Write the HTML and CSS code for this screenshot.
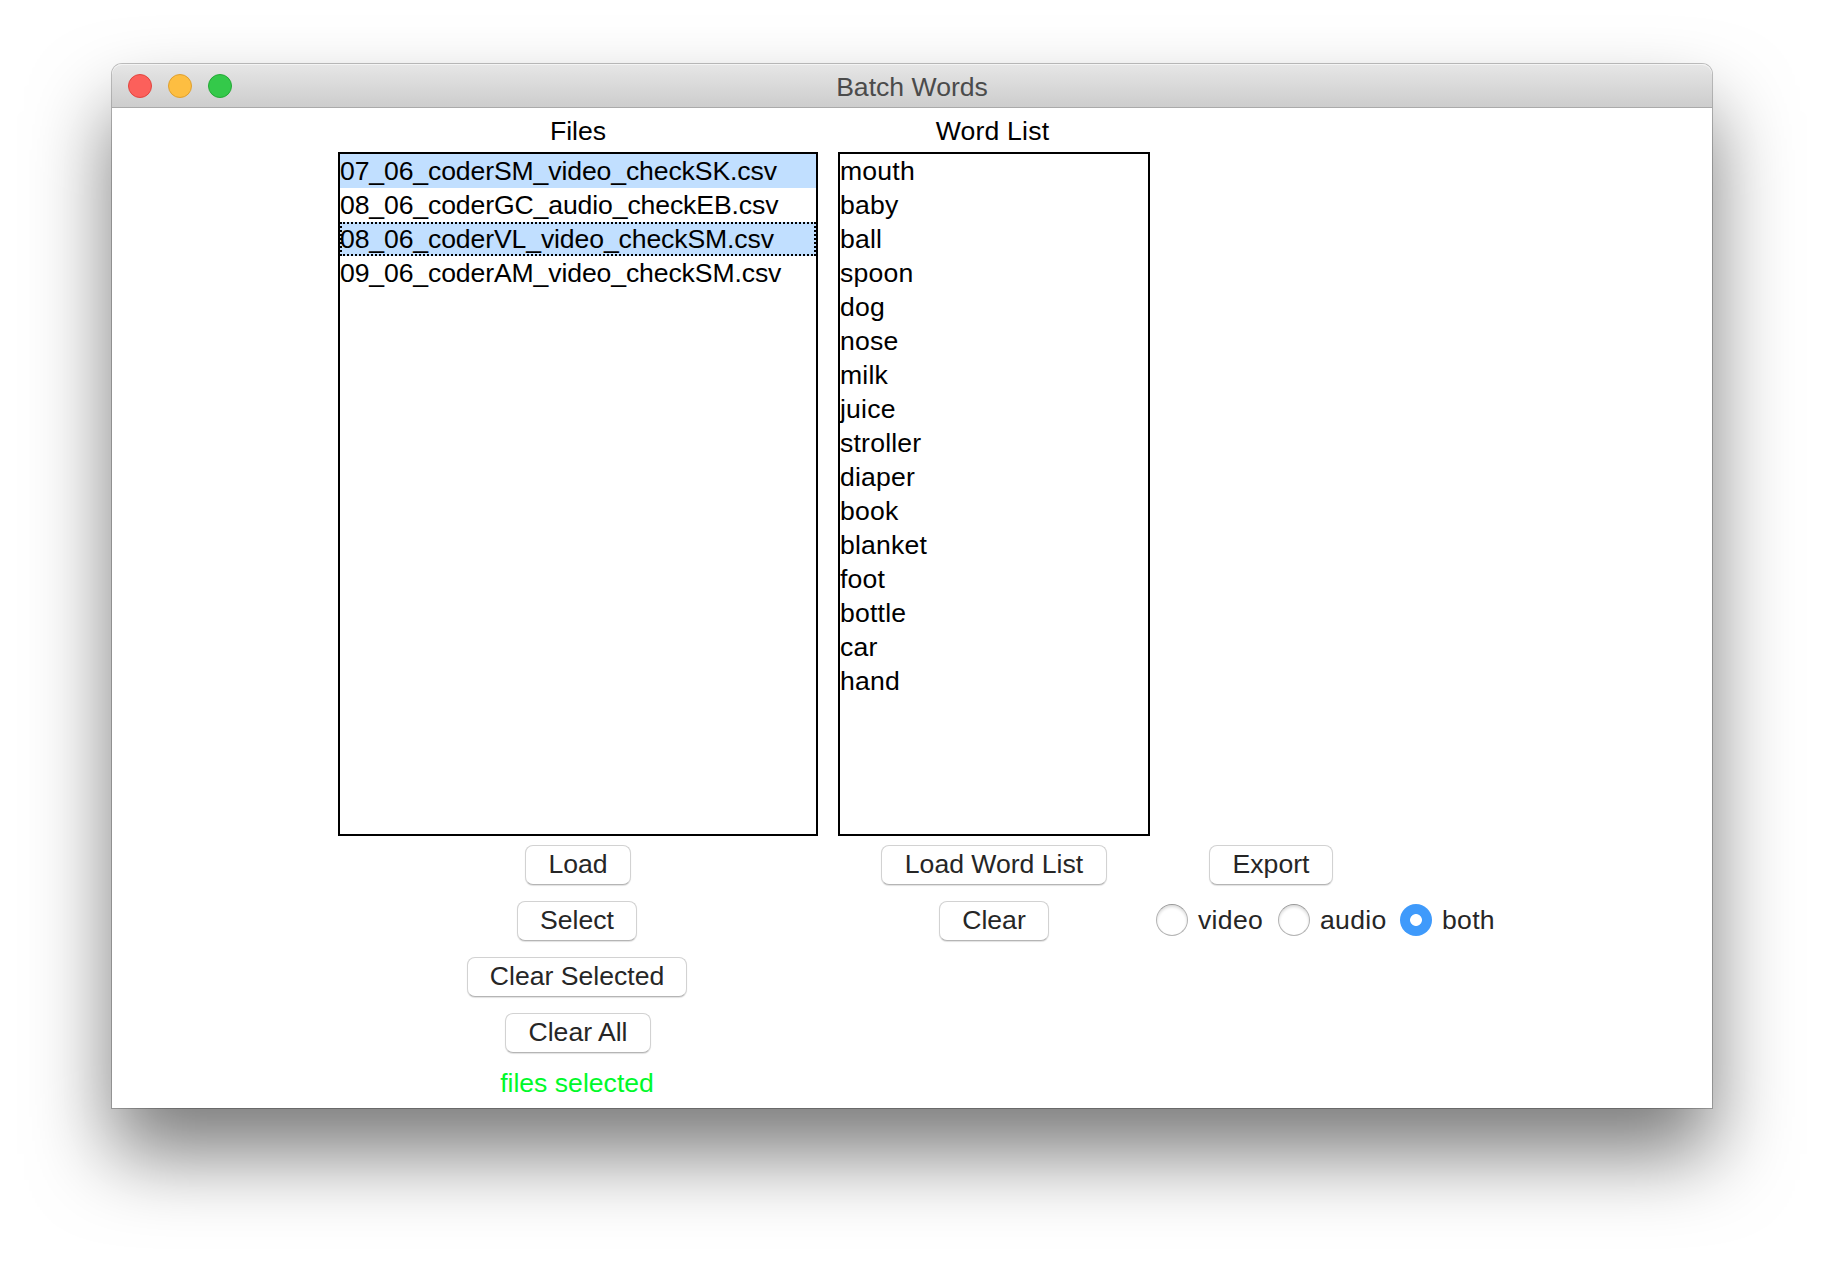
FILE: index.html
```html
<!DOCTYPE html>
<html lang="en">
<head>
<meta charset="utf-8">
<title>Batch Words</title>
<link rel="stylesheet" href="styles.css">
</head>
<body>
<main class="window">
  <header class="titlebar">
    <div class="lights">
      <span class="light close"></span>
      <span class="light minimize"></span>
      <span class="light zoom"></span>
    </div>
    <h1 class="title">Batch Words</h1>
  </header>
  <div class="content">
    <section class="column files">
      <h2 class="label">Files</h2>
      <ul class="listbox">
        <li class="selected">07_06_coderSM_video_checkSK.csv</li>
        <li>08_06_coderGC_audio_checkEB.csv</li>
        <li class="selected active">08_06_coderVL_video_checkSM.csv</li>
        <li>09_06_coderAM_video_checkSM.csv</li>
      </ul>
      <div class="buttons">
        <button class="btn load">Load</button>
        <button class="btn select">Select</button>
        <button class="btn clear-selected">Clear Selected</button>
        <button class="btn clear-all">Clear All</button>
      </div>
      <p class="status">files selected</p>
    </section>
    <section class="column words">
      <h2 class="label">Word List</h2>
      <ul class="listbox">
        <li>mouth</li>
        <li>baby</li>
        <li>ball</li>
        <li>spoon</li>
        <li>dog</li>
        <li>nose</li>
        <li>milk</li>
        <li>juice</li>
        <li>stroller</li>
        <li>diaper</li>
        <li>book</li>
        <li>blanket</li>
        <li>foot</li>
        <li>bottle</li>
        <li>car</li>
        <li>hand</li>
      </ul>
      <div class="buttons">
        <button class="btn load-words">Load Word List</button>
        <button class="btn clear">Clear</button>
      </div>
    </section>
    <section class="column export-column">
      <button class="btn export">Export</button>
      <div class="radios">
        <label class="radio"><span class="dot"></span>video</label>
        <label class="radio"><span class="dot"></span>audio</label>
        <label class="radio"><span class="dot checked"></span>both</label>
      </div>
    </section>
  </div>
</main>
</body>
</html>
```
FILE: styles.css
```css
* {
  box-sizing: border-box;
}

body {
  margin: 0;
  height: 1268px;
  padding: 64px 112px;
  overflow: hidden;
  background: #fff;
  color: #000;
  font: 26.6px/34px "Liberation Sans", Arial, sans-serif;
}

h1, h2, p, ul {
  margin: 0;
  padding: 0;
  font-size: inherit;
  font-weight: normal;
}

.window {
  width: 1600px;
  height: 1044px;
  border-radius: 10px 10px 0 0;
  background: #fff;
  box-shadow: 0 0 0 1px rgba(0, 0, 0, 0.24), 0 46px 80px rgba(0, 0, 0, 0.52);
}

.titlebar {
  display: grid;
  grid-template-columns: 1fr auto 1fr;
  align-items: center;
  height: 44px;
  padding: 0 16px;
  border-bottom: 1px solid #aaa;
  border-radius: 10px 10px 0 0;
  background: linear-gradient(#e6e6e6, #cdcdcd);
  box-shadow: inset 0 1px #f4f4f4;
}

.title {
  padding-top: 2px;
  color: #4b4b4b;
}

.lights {
  display: flex;
  gap: 16px;
}

.light {
  width: 24px;
  height: 24px;
  border: 1px solid;
  border-radius: 50%;
}

.close {
  border-color: #e2453f;
  background: #fc605b;
}

.minimize {
  border-color: #dfa02f;
  background: #fdbe41;
}

.zoom {
  border-color: #24a936;
  background: #34c94a;
}

.content {
  display: grid;
  grid-template-columns: 480px 312px 360px;
  column-gap: 20px;
  height: 1000px;
  padding: 6px 0 0 226px;
}

.column {
  display: flex;
  flex-direction: column;
  align-items: center;
}

.label {
  height: 38px;
}

.words .label {
  padding-right: 3px;
  letter-spacing: 0.2px;
}

.listbox {
  width: 100%;
  height: 684px;
  border: 2px solid #000;
  list-style: none;
}

.listbox li {
  position: relative;
  height: 34px;
  line-height: 35px;
  white-space: nowrap;
}

.files li {
  letter-spacing: -0.12px;
}

.words li {
  letter-spacing: 0.2px;
}

.selected {
  background: #c1dfff;
}

.active::after {
  content: "";
  position: absolute;
  inset: 0;
  border: 2px dotted #000;
}

.buttons {
  display: flex;
  flex-direction: column;
  align-items: center;
  gap: 16px;
  margin-top: 9px;
}

.btn {
  height: 40px;
  padding: 0 0 2px;
  border: 1px solid #d2d2d2;
  border-bottom-color: #b5b5b5;
  border-radius: 8px;
  background: #fff;
  box-shadow: 0 1px 1px rgba(0, 0, 0, 0.12);
  color: #262626;
  font: inherit;
  white-space: nowrap;
}

.load { width: 106px; }
.select { width: 120px; margin-right: 2px; }
.clear-selected { width: 220px; margin-right: 2px; }
.clear-all { width: 146px; }
.load-words { width: 226px; }
.clear { width: 110px; }
.export { width: 124px; }

.status {
  margin-top: 13px;
  padding-right: 2px;
  color: #00f92a;
}

.export-column {
  align-items: flex-start;
  padding-top: 731px;
}

.export {
  margin-left: 39px;
}

.radios {
  display: flex;
  margin: 16px 0 0 -14px;
}

.radio {
  display: flex;
  align-items: center;
  gap: 10px;
  width: 122px;
  height: 38px;
  color: #262626;
  letter-spacing: 0.3px;
}

.dot {
  flex: none;
  width: 32px;
  height: 32px;
  border: 1px solid #b4b4b4;
  border-top-color: #999;
  border-radius: 50%;
  box-shadow: inset 0 2px 3px rgba(0, 0, 0, 0.14);
}

.checked {
  border: 0;
  background: radial-gradient(circle, #fff 5.5px, #3f9afb 6.3px);
  box-shadow: none;
}
```
